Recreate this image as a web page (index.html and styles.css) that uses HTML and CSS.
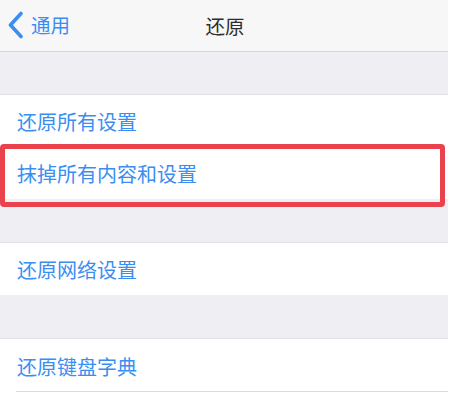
FILE: index.html
```html
<!DOCTYPE html>
<html lang="zh-CN">
<head>
<meta charset="utf-8">
<title>还原</title>
<link rel="stylesheet" href="styles.css">
</head>
<body>
<div class="screen">
  <header class="nav">
    <div class="back">
      <svg class="chev" width="17" height="28" viewBox="0 0 17 28"><path d="M14 2.5 L3.5 14 L14 25.5" fill="none" stroke="#3a8ef2" stroke-width="3.6" stroke-linecap="round" stroke-linejoin="round"/></svg>
      <span>通用</span>
    </div>
    <div class="title">还原</div>
    <div></div>
  </header>
  <div class="gap first"></div>
  <div class="row">还原所有设置</div>
  <div class="row marked">抹掉所有内容和设置</div>
  <div class="gap"></div>
  <div class="row">还原网络设置</div>
  <div class="gap"></div>
  <div class="row last">还原键盘字典</div>
</div>
</body>
</html>
```

FILE: styles.css
```css
html, body {
  margin: 0;
  padding: 0;
  background: #ffffff;
}
body {
  font-family: "Noto Sans CJK SC", "Noto Sans", sans-serif;
}
.screen {
  width: 448px;
  display: flex;
  flex-direction: column;
}
.nav {
  height: 51px;
  background: #f7f7f8;
  border-bottom: 1px solid #d7d7da;
  display: grid;
  grid-template-columns: 1fr auto 1fr;
  align-items: center;
}
.back {
  display: flex;
  align-items: center;
  gap: 7px;
  padding-left: 7px;
  color: #3a8ef2;
  font-size: 19.5px;
  margin-top: -1px;
}
.back span {
  line-height: 1;
}
.chev {
  display: block;
}
.title {
  font-size: 19.5px;
  color: #2e2e2e;
  margin-left: 2px;
  margin-top: -1px;
}
.gap {
  height: 43px;
  background: #efeff3;
  border-bottom: 1px solid #e2e2e6;
}
.gap.first {
  height: 42px;
}
.row {
  height: 52px;
  display: flex;
  align-items: center;
  padding-left: 17px;
  font-size: 20px;
  color: #3a8ef2;
  background: #ffffff;
}
.row.marked {
  position: relative;
}
.row.marked::after {
  content: "";
  position: absolute;
  left: 0;
  right: 3px;
  top: -3px;
  bottom: -8px;
  border: 5px solid #e9424c;
  border-radius: 4px;
}
.row.last {
  height: 53px;
  box-sizing: border-box;
  padding-top: 1px;
  background: #ffffff linear-gradient(#dcdce0, #dcdce0) no-repeat 16px 100% / calc(100% - 16px) 1px;
}
```
